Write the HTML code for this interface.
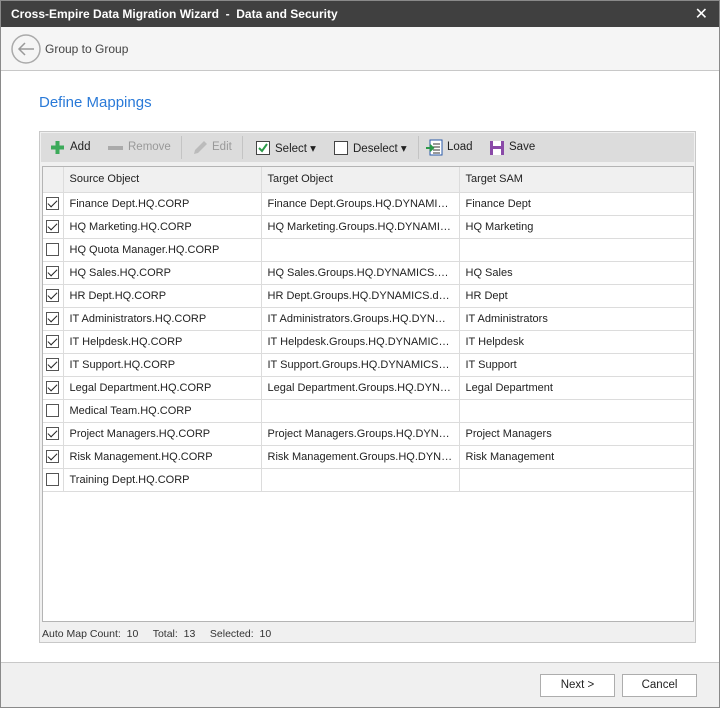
<!DOCTYPE html><html><head><style>
*{box-sizing:border-box}body{margin:0;width:720px;height:708px;font-family:"Liberation Sans",sans-serif;font-size:11px;color:#222;position:relative;overflow:hidden;background:#fff}
.a{position:absolute}
#win{left:0;top:0;width:720px;height:708px;border:1px solid #8a8a8a}
#title{left:0;top:0;width:720px;height:27px;background:#404040;color:#fff;font-weight:bold;font-size:12px;padding:7px 11px}
#nav{left:1px;top:27px;width:718px;height:44px;background:#f5f5f5;border-bottom:1px solid #c8c8c8}
#panel{left:39px;top:131px;width:657px;height:512px;border:1px solid #c8c8c8;background:#f0f0f0}
#tb{left:41px;top:133px;width:653px;height:29px;background:#dcdcdc}
#grid{left:42px;top:166px;width:652px;height:456px;border:1px solid #b4b4b4;background:#fff}
table{border-collapse:collapse;position:absolute;left:0;top:0;width:650px;table-layout:fixed}
td{border:1px solid #dcdcdc;height:23px;padding:0 6px;white-space:nowrap;overflow:hidden;text-overflow:ellipsis}
tr:first-child td{background:#f0f0f0;height:25px;border-top:none}
td:first-child{border-left:none;padding:0 3px}
td:last-child{border-right:none}
.cb{width:13px;height:13px;border:1px solid #555;display:inline-block;vertical-align:middle;position:relative;background:#fff}
.cb.c::after{content:"";position:absolute;left:3px;top:0px;width:4px;height:8px;border:solid #222;border-width:0 1.5px 1.5px 0;transform:rotate(45deg)}
.ti{top:141px;font-size:11.5px}
.btn{top:674px;width:75px;height:23px;border:1px solid #adadad;background:#fff;text-align:center;line-height:21px;font-size:11.5px}
</style></head><body>
<div class="a" id="title">Cross-Empire Data Migration Wizard &nbsp;- &nbsp;Data and Security</div>
<div class="a" style="right:12px;top:4px;color:#fff;font-size:16px">✕</div>
<div class="a" id="nav"></div>
<svg class="a" style="left:10px;top:33px" width="32" height="32"><circle cx="16" cy="16" r="14" fill="none" stroke="#aaa" stroke-width="1.5"/><path d="M24 16H9M15 10L9 16L15 22" fill="none" stroke="#999" stroke-width="1.5"/></svg>
<div class="a" style="left:45px;top:42px;font-size:12px;color:#444">Group to Group</div>
<div class="a" style="left:39px;top:94px;font-size:15px;color:#2a7ad8">Define Mappings</div>
<div class="a" id="panel"></div>
<div class="a" id="tb"></div>
<svg class="a" style="left:50px;top:140px" width="15" height="15"><path d="M7.5 1v13M1 7.5h13" stroke="#3caa5a" stroke-width="4"/></svg>
<div class="a ti" style="left:70px">Add</div>
<div class="a" style="left:108px;top:146px;width:15px;height:4px;background:#aaa"></div>
<div class="a ti" style="left:128px;color:#999">Remove</div>
<div class="a" style="left:181px;top:136px;width:1px;height:23px;background:#c4c4c4"></div>
<svg class="a" style="left:191px;top:139px" width="18" height="18"><path d="M3 15L4 11L13 2L16 5L7 14Z" fill="#bbb"/></svg>
<div class="a ti" style="left:212px;color:#999">Edit</div>
<div class="a" style="left:242px;top:136px;width:1px;height:23px;background:#c4c4c4"></div>
<div class="a" style="left:256px;top:141px;width:14px;height:14px;border:1px solid #444;background:#fff"></div>
<svg class="a" style="left:256px;top:141px" width="14" height="14"><path d="M3 7L6 10L11 3" fill="none" stroke="#2b9a48" stroke-width="2"/></svg>
<div class="a ti" style="left:275px">Select ▾</div>
<div class="a" style="left:334px;top:141px;width:14px;height:14px;border:1px solid #444;background:#fff"></div>
<div class="a ti" style="left:353px">Deselect ▾</div>
<div class="a" style="left:418px;top:136px;width:1px;height:23px;background:#c4c4c4"></div>
<svg class="a" style="left:426px;top:139px" width="17" height="17"><rect x="4" y="1" width="12" height="15" fill="#fff" stroke="#2a5aa8"/><path d="M7 5h7M7 8h7M7 11h7M7 14h7" stroke="#333"/><path d="M0 9h6M4 6l3 3-3 3" fill="none" stroke="#2b9a48" stroke-width="2"/></svg>
<div class="a ti" style="left:447px">Load</div>
<svg class="a" style="left:489px;top:140px" width="16" height="16"><rect x="1" y="1" width="14" height="14" fill="#8a4aa8"/><rect x="4" y="1" width="8" height="5" fill="#fff"/><rect x="4" y="9" width="8" height="6" fill="#fff"/></svg>
<div class="a ti" style="left:509px">Save</div>
<div class="a" id="grid"><table>
<colgroup><col style="width:20px"><col style="width:198px"><col style="width:198px"><col></colgroup>
<tr><td></td><td>Source Object</td><td>Target Object</td><td>Target SAM</td></tr>
<tr><td><span class="cb c"></span></td><td>Finance Dept.HQ.CORP</td><td>Finance Dept.Groups.HQ.DYNAMICS.dynamics.com</td><td>Finance Dept</td></tr>
<tr><td><span class="cb c"></span></td><td>HQ Marketing.HQ.CORP</td><td>HQ Marketing.Groups.HQ.DYNAMICS.dynamics.com</td><td>HQ Marketing</td></tr>
<tr><td><span class="cb"></span></td><td>HQ Quota Manager.HQ.CORP</td><td></td><td></td></tr>
<tr><td><span class="cb c"></span></td><td>HQ Sales.HQ.CORP</td><td>HQ Sales.Groups.HQ.DYNAMICS.dynamics.com</td><td>HQ Sales</td></tr>
<tr><td><span class="cb c"></span></td><td>HR Dept.HQ.CORP</td><td>HR Dept.Groups.HQ.DYNAMICS.dynamics.com</td><td>HR Dept</td></tr>
<tr><td><span class="cb c"></span></td><td>IT Administrators.HQ.CORP</td><td>IT Administrators.Groups.HQ.DYNAMICS.com</td><td>IT Administrators</td></tr>
<tr><td><span class="cb c"></span></td><td>IT Helpdesk.HQ.CORP</td><td>IT Helpdesk.Groups.HQ.DYNAMICS.dynamics.com</td><td>IT Helpdesk</td></tr>
<tr><td><span class="cb c"></span></td><td>IT Support.HQ.CORP</td><td>IT Support.Groups.HQ.DYNAMICS.dynamics.com</td><td>IT Support</td></tr>
<tr><td><span class="cb c"></span></td><td>Legal Department.HQ.CORP</td><td>Legal Department.Groups.HQ.DYNAMICS.com</td><td>Legal Department</td></tr>
<tr><td><span class="cb"></span></td><td>Medical Team.HQ.CORP</td><td></td><td></td></tr>
<tr><td><span class="cb c"></span></td><td>Project Managers.HQ.CORP</td><td>Project Managers.Groups.HQ.DYNAMICS.com</td><td>Project Managers</td></tr>
<tr><td><span class="cb c"></span></td><td>Risk Management.HQ.CORP</td><td>Risk Management.Groups.HQ.DYNAMICS.com</td><td>Risk Management</td></tr>
<tr><td><span class="cb"></span></td><td>Training Dept.HQ.CORP</td><td></td><td></td></tr>
</table></div>
<div class="a" style="left:42px;top:628px;font-size:10.5px;color:#333">Auto Map Count:&nbsp; 10 &nbsp;&nbsp;&nbsp; Total:&nbsp; 13 &nbsp;&nbsp;&nbsp; Selected:&nbsp; 10</div>
<div class="a" style="left:1px;top:662px;width:718px;height:45px;background:#f0f0f0;border-top:1px solid #c8c8c8"></div>
<div class="a btn" style="left:540px">Next &gt;</div>
<div class="a btn" style="left:622px">Cancel</div>
<div class="a" id="win"></div>
</body></html>
